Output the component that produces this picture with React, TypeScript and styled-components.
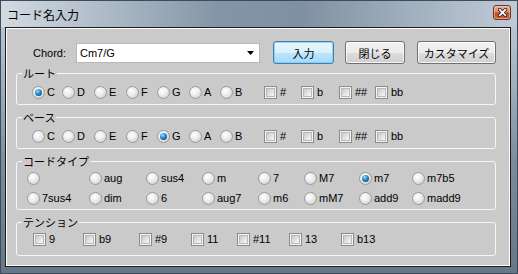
import React from "react";
import styled, { createGlobalStyle } from "styled-components";

const GlobalStyle = createGlobalStyle`
  html, body {
    margin: 0;
    padding: 0;
    background: #ffffff;
  }
  body {
    font-family: "Liberation Sans", "Noto Sans CJK JP", sans-serif;
    font-size: 11px;
    color: #000000;
  }
`;

const roots = ["C", "D", "E", "F", "G", "A", "B"];
const rootWidths = [30, 32, 32, 31, 32, 31, 44];
const accidentals = ["#", "b", "##", "bb"];
const accidentalWidths = [37, 38, 36, 30];
const chordTypes = ["", "aug", "sus4", "m", "7", "M7", "m7", "m7b5", "7sus4", "dim", "6", "aug7", "m6", "mM7", "add9", "madd9"];
const tensions = ["9", "b9", "#9", "11", "#11", "13", "b13"];
const tensionWidths = [50, 56, 52, 46, 52, 52, 40];

interface NoteRowProps {
  selected: string;
}

const NoteRow: React.FC<NoteRowProps> = ({ selected }) => (
  <Row>
    {roots.map((note, i) => (
      <Item key={note} $w={rootWidths[i]}>
        <Radio $checked={note === selected} />
        <span>{note}</span>
      </Item>
    ))}
    {accidentals.map((acc, i) => (
      <Item key={acc} $w={accidentalWidths[i]} $gap={3}>
        <Check />
        <span>{acc}</span>
      </Item>
    ))}
  </Row>
);

const App: React.FC = () => {
  return (
    <>
      <GlobalStyle />
      <Window>
        <TitleBar>
          <Title>コード名入力</Title>
          <CloseButton>
            <svg width="9" height="9" viewBox="0 0 9 9">
              <path d="M1.5 1.5 L7.5 7.5 M7.5 1.5 L1.5 7.5" stroke="#3a2a28" strokeWidth="3.4" strokeLinecap="square" />
              <path d="M1.8 1.8 L7.2 7.2 M7.2 1.8 L1.8 7.2" stroke="#ffffff" strokeWidth="1.7" strokeLinecap="square" />
            </svg>
          </CloseButton>
        </TitleBar>
        <Client>
          <TopRow>
            <ChordLabel>Chord:</ChordLabel>
            <Combo>
              <span>Cm7/G</span>
              <svg width="7" height="4" viewBox="0 0 7 4">
                <path d="M0 0 H7 L3.5 4 Z" fill="#000000" />
              </svg>
            </Combo>
            <Button $w={61} $primary $ml={13}>入力</Button>
            <Button $w={60} $ml={11}>閉じる</Button>
            <Button $w={79} $ml={12}>カスタマイズ</Button>
          </TopRow>
          <Groups>
            <Group $h={32}>
              <GroupLabel>ルート</GroupLabel>
              <GroupBody $pt={11} $pl={15}>
                <NoteRow selected="C" />
              </GroupBody>
            </Group>
            <Group $h={32}>
              <GroupLabel>ベース</GroupLabel>
              <GroupBody $pt={11} $pl={15}>
                <NoteRow selected="G" />
              </GroupBody>
            </Group>
            <Group $h={49}>
              <GroupLabel>コードタイプ</GroupLabel>
              <GroupBody $pt={9} $pl={10}>
                <TypeGrid>
                  {chordTypes.map((type, i) => (
                    <Item key={i}>
                      <Radio $checked={type === "m7"} />
                      <span>{type}</span>
                    </Item>
                  ))}
                </TypeGrid>
              </GroupBody>
            </Group>
            <Group $h={34}>
              <GroupLabel>テンション</GroupLabel>
              <GroupBody $pt={9} $pl={16}>
                <Row>
                  {tensions.map((t, i) => (
                    <Item key={t} $w={tensionWidths[i]} $gap={3}>
                      <Check />
                      <span>{t}</span>
                    </Item>
                  ))}
                </Row>
              </GroupBody>
            </Group>
          </Groups>
        </Client>
      </Window>
    </>
  );
};

const Window = styled.div`
  width: 518px;
  height: 274px;
  box-sizing: border-box;
  border: 1px solid #3e4c5a;
  background: linear-gradient(180deg, #c4cfda 0%, #a2b0bf 30%, #7a8b9d 60%, #66778a 100%);
  display: flex;
  flex-direction: column;
`;

const TitleBar = styled.div`
  height: 26px;
  flex: none;
  display: flex;
  align-items: flex-start;
  padding: 0 6px 0 6px;
  background: linear-gradient(90deg, #d2dae2 0%, #aebbc7 20%, #8495a7 42%, #7f90a2 58%, #a5b3c1 82%, #bfcad5 100%);
`;

const Title = styled.div`
  font-family: "Noto Sans CJK JP", sans-serif;
  font-size: 12px;
  line-height: 16px;
  margin-top: 6px;
  color: #000000;
`;

const CloseButton = styled.div`
  margin-left: auto;
  margin-top: 4px;
  width: 18px;
  height: 15px;
  box-sizing: border-box;
  border: 1px solid #6e3426;
  border-radius: 3px;
  background: linear-gradient(180deg, #eab4a2 0%, #dc8468 45%, #c5492a 55%, #d0643c 100%);
  box-shadow: inset 0 0 0 1px rgba(255, 220, 200, 0.45);
  display: flex;
  align-items: center;
  justify-content: center;
`;

const Client = styled.div`
  flex: 1;
  margin: 0 6px 6px 4px;
  border: 1px solid #1c1c1c;
  box-shadow: inset 1px 1px 0 #ffffff, inset -1px -1px 0 #ffffff;
  background: #cacaca;
  padding-top: 13px;
`;

const TopRow = styled.div`
  display: flex;
  align-items: center;
  height: 23px;
  padding-left: 27px;
`;

const ChordLabel = styled.div`
  width: 43px;
  line-height: 14px;
`;

const Combo = styled.div`
  width: 184px;
  height: 20px;
  box-sizing: border-box;
  border: 1px solid #b9b9b9;
  background: #ffffff;
  display: flex;
  align-items: center;
  padding: 0 5px 0 3px;
  justify-content: space-between;
  line-height: 14px;
`;

const Button = styled.div<{ $w: number; $primary?: boolean; $ml: number }>`
  width: ${(p) => p.$w}px;
  height: 23px;
  margin-left: ${(p) => p.$ml}px;
  box-sizing: border-box;
  border: 1px solid ${(p) => (p.$primary ? "#3c7fb1" : "#707070")};
  border-radius: 3px;
  background: ${(p) =>
    p.$primary
      ? "linear-gradient(180deg, #eaf6fd 0%, #d9f0fc 50%, #bee6fd 51%, #a7d9f5 100%)"
      : "linear-gradient(180deg, #f2f2f2 0%, #ebebeb 50%, #dddddd 51%, #cfcfcf 100%)"};
  box-shadow: inset 0 0 0 1px ${(p) => (p.$primary ? "rgba(120, 200, 240, 0.7)" : "rgba(255, 255, 255, 0.8)")};
  display: flex;
  align-items: center;
  justify-content: center;
  font-family: "Noto Sans CJK JP", sans-serif;
  font-size: 11px;
  line-height: 14px;
`;

const Groups = styled.div`
  display: flex;
  flex-direction: column;
  gap: 12px;
  width: 480px;
  margin: 9px 0 0 10px;
`;

const Group = styled.div<{ $h: number }>`
  position: relative;
  height: ${(p) => p.$h}px;
  box-sizing: border-box;
  border: 1px solid #f7f7f7;
  border-radius: 3px;
`;

const GroupLabel = styled.div`
  position: absolute;
  top: -8px;
  left: 5px;
  padding: 0 1px;
  background: #cacaca;
  font-family: "Noto Sans CJK JP", sans-serif;
  font-size: 11px;
  line-height: 14px;
`;

const GroupBody = styled.div<{ $pt: number; $pl: number }>`
  padding: ${(p) => p.$pt}px 0 0 ${(p) => p.$pl}px;
`;

const Row = styled.div`
  display: flex;
  align-items: center;
  height: 14px;
`;

const TypeGrid = styled.div`
  display: grid;
  grid-template-columns: 62px 57px 56px 56px 46px 55px 53px auto;
  grid-auto-rows: 14px;
  row-gap: 6px;
`;

const Item = styled.div<{ $w?: number; $gap?: number }>`
  display: flex;
  align-items: center;
  gap: ${(p) => p.$gap ?? 2}px;
  width: ${(p) => (p.$w ? `${p.$w}px` : "auto")};
  flex: none;
  line-height: 14px;
  white-space: nowrap;
`;

const Radio = styled.span<{ $checked?: boolean }>`
  position: relative;
  width: 13px;
  height: 13px;
  box-sizing: border-box;
  flex: none;
  border-radius: 50%;
  border: 1px solid #9a9a9a;
  background: radial-gradient(circle at 40% 35%, #ffffff 0%, #eeeeee 40%, #c6c6c6 100%);

  &::after {
    content: "";
    display: ${(p) => (p.$checked ? "block" : "none")};
    position: absolute;
    left: 2px;
    top: 2px;
    width: 7px;
    height: 7px;
    border-radius: 50%;
    background: radial-gradient(circle at 38% 32%, #a6dcff 0%, #3a97dc 35%, #11578f 75%, #0b3d6c 100%);
  }
`;

const Check = styled.span`
  position: relative;
  width: 13px;
  height: 13px;
  box-sizing: border-box;
  flex: none;
  border: 1px solid #8c8c8c;
  background: #f4f4f4;

  &::after {
    content: "";
    position: absolute;
    inset: 1px;
    border: 1px solid #b9b9b9;
    background: linear-gradient(135deg, #c8c8c8 0%, #e6e6e6 60%, #f7f7f7 100%);
  }
`;

export default App;
